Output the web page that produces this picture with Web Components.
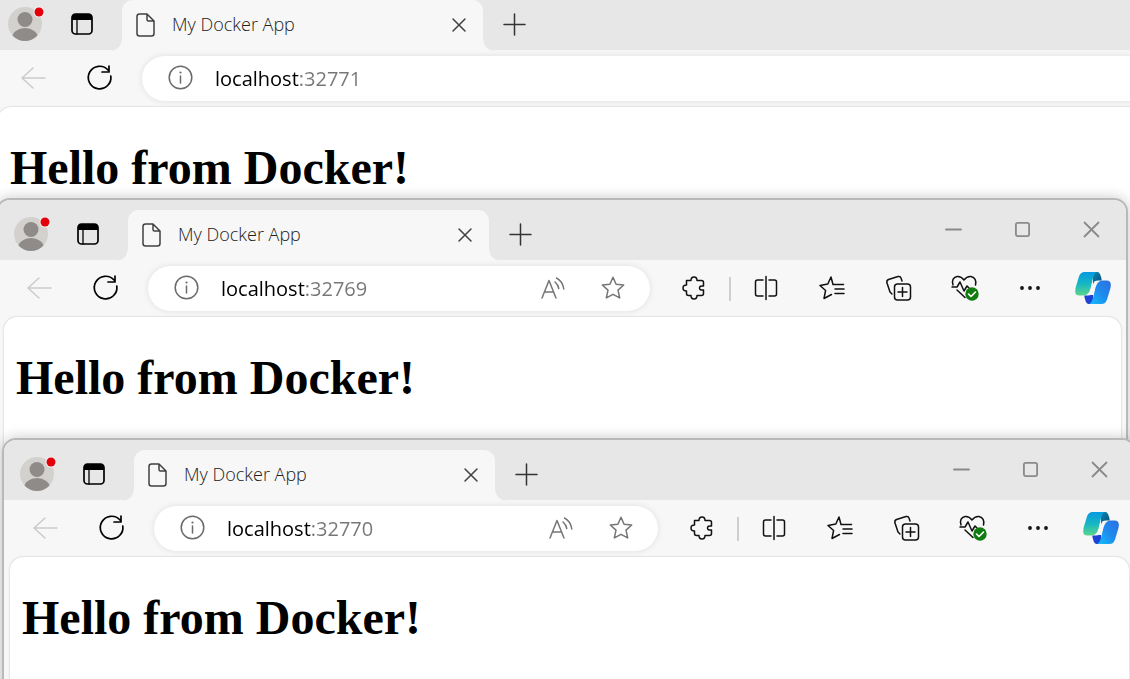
<!DOCTYPE html>
<html lang="en">
<head>
<meta charset="utf-8">
<title>My Docker App</title>
<style>
html, body { height: 100%; margin: 0; }
body { overflow: hidden; background: #fff; font-family: "Open Sans", "Noto Sans", sans-serif; }
h1 { margin: 0; font: bold 48px/56px "Liberation Serif", "Times New Roman", serif; color: #000; }
</style>
</head>
<body>
<desk-top>
  <browser-window style="left:-10px;right:-60px;top:-12px" label="My Docker App" address="localhost:32771">
    <h1>Hello from Docker!</h1>
  </browser-window>
  <browser-window style="left:-4px;right:2px;top:198px" label="My Docker App" address="localhost:32769">
    <window-controls slot="controls"></window-controls>
    <page-actions slot="actions"></page-actions>
    <tool-buttons slot="tools"></tool-buttons>
    <h1>Hello from Docker!</h1>
  </browser-window>
  <browser-window style="left:2px;right:-6px;top:438px" label="My Docker App" address="localhost:32770">
    <window-controls slot="controls"></window-controls>
    <page-actions slot="actions"></page-actions>
    <tool-buttons slot="tools"></tool-buttons>
    <h1>Hello from Docker!</h1>
  </browser-window>
</desk-top>

<script>
const reset = `
  *, *::before, *::after { box-sizing: border-box; }
  button { display: flex; align-items: center; justify-content: center; flex: none;
    margin: 0; padding: 0 0 2px; border: 0; background: none; color: inherit; font: inherit; }
  svg { display: block; flex: none; overflow: visible; }
`;

class BaseElement extends HTMLElement {
  connectedCallback() {
    if (this.shadowRoot) return;
    this.attachShadow({ mode: 'open' }).innerHTML = `<style>${reset}${this.css()}</style>${this.html()}`;
    this.ready();
  }
  css() { return ''; }
  html() { return ''; }
  ready() {}
}

/* Line icons: [width, height, markup] */
const icons = {
  profile: [50, 50, `
    <defs><clipPath id="c"><circle cx="25" cy="25" r="17"/></clipPath></defs>
    <circle cx="25" cy="25" r="17" fill="#d3d1cd" stroke="none"/>
    <g clip-path="url(#c)" fill="#8f8b88" stroke="none"><circle cx="25" cy="20.500" r="7.500"/><ellipse cx="25" cy="39" rx="13" ry="10"/></g>
    <circle cx="39" cy="13" r="5.500" fill="#f4f4f4" stroke="none"/><circle cx="39" cy="13" r="4.500" fill="#e3000b" stroke="none"/>`],
  tabs: [22, 22, `
    <rect x="1" y="1" width="20" height="20" rx="3.500" stroke-width="1.700"/>
    <path d="M1 7V4q0-3 3-3h14q3 0 3 3v3z" fill="currentColor" stroke="none"/><path d="M6 7v14" stroke-width="1.300"/>`],
  page: [20, 24, `<path d="M3.500 1H11l7 7v12.500q0 2.500-2.500 2.500h-12Q1 23 1 20.500v-17Q1 1 3.500 1zM11 1v5.500Q11 8 12.500 8H18"/>`],
  close: [12, 12, `<path d="M0 0l12 12M12 0L0 12"/>`],
  plus: [21, 21, `<path d="M10.500 0v21M0 10.500h21"/>`],
  back: [24, 22, `<path d="M12 1L1 11l11 10M1 11h23"/>`],
  reload: [25, 25, `<path d="M21 5A11.300 11.300 0 1 0 23.800 11M22 1v6h-7" stroke-width="1.700"/>`],
  info: [25, 25, `<circle cx="12.500" cy="12.500" r="11.300"/><path d="M12.500 11v7"/><circle cx="12.500" cy="7.500" r="1.100" fill="currentColor" stroke="none"/>`],
  minimize: [15, 15, `<path d="M0 7.500h15" stroke-width="1.800"/>`],
  maximize: [15, 15, `<rect x=".900" y=".900" width="13.200" height="13.200" rx="1.800" stroke-width="1.800"/>`],
  closeWindow: [15, 15, `<path d="M.500.500l14 14M14.500.500l-14 14" stroke-width="1.800"/>`],
  read: [24, 22, `<path d="M1 21L8 3.500 15 21M3.500 15h9M14 5q3 2.500 3.800 6.500M15.500 1q6 3 7.300 11"/>`],
  star: [24, 24, `<path d="M12 1.200l3.100 7 7.600.800-5.700 5.100 1.700 7.800L12 18.300l-6.700 3.600L7 14.100 1.300 9l7.600-.800z"/>`],
  puzzle: [24, 24, `<path d="M4.500 4.500H9Q9 1 12 1t3 3.500h4.500q2 0 2 2V10q-4-.5-4 2t4 2v3.500q0 2-2 2H15q0 3.500-3 3.500t-3-3.500H6.500q-2 0-2-2V15Q1 15 1 12t3.500-3z"/>`],
  split: [24, 24, `<path d="M9 4H3.500Q1.500 4 1.500 6v12q0 2 2 2H9M15 4h5.500q2 0 2 2v12q0 2-2 2H15M12 .500v23"/>`],
  favorites: [26, 24, `<path d="M14 8.500L12 1 8.800 8 1 9.500l5.600 5L5 22.500l7.500-4M14.500 8.500h10M16 13h9M16 17.500h9"/>`],
  collections: [26, 26, `<path d="M5 17L2 8q-.8-2.500 1.500-3.500L13 1.500q2.500-.5 3 1.500l1 3M5 17l2 2"/><rect x="9.500" y="9" width="16" height="16" rx="3"/><path d="M17.500 12.500v9M13 17h9"/>`],
  health: [28, 26, `<path d="M3 10Q1 3 7 1.500q4-.5 7 3.500 3-4 7-3.500 6 1.500 4.500 8.500M2 12h5l3-5 4 9 3-5 2 2M7 15l8 7.500"/>
    <circle cx="22" cy="19" r="6.700" fill="#107c10" stroke="none"/><path d="M18.500 19l2.500 2.500 4.500-4.500" stroke="#fff" stroke-width="1.600"/>`],
  more: [22, 6, `<g fill="currentColor" stroke="none"><circle cx="3" cy="3" r="1.900"/><circle cx="11" cy="3" r="1.900"/><circle cx="19" cy="3" r="1.900"/></g>`],
  copilot: [36, 32, `
    <defs>
      <linearGradient id="g" x1="0" y1="0" x2="0" y2="1"><stop offset="0" stop-color="#0799e0"/><stop offset=".5" stop-color="#16b7c4"/><stop offset="1" stop-color="#5bd58b"/></linearGradient>
      <linearGradient id="b" x1="1" y1="0" x2="0" y2="1"><stop offset="0" stop-color="#2f6fe0"/><stop offset=".5" stop-color="#1d8bee"/><stop offset="1" stop-color="#16c0fa"/></linearGradient>
      <linearGradient id="d" x1="0" y1="0" x2="1" y2="1"><stop offset="0" stop-color="#0b88ad"/><stop offset="1" stop-color="#0b4c80"/></linearGradient>
    </defs>
    <g stroke="none">
      <path d="M18 0h4.500q3 0 4.300 8.500H23q-4 0-5 4z" fill="url(#d)"/>
      <path d="M18 32h-4.500q-3 0-4.300-8.500H13q4 0 5-4z" fill="#1c43d5"/>
      <path d="M16 23l4-14h6l-5 14z" fill="#f7f7f7"/>
      <path d="M9.500 0H22q-2.500.5-4 6l-2.500 10.500q-2 7-7 7H4Q-1 23.500.500 16L4 4.500Q5.500 0 9.500 0z" fill="url(#g)"/>
      <path d="M26.500 32H14q2.500-.5 4-6l2.500-10.500q2-7 7-7h4.500q5 0 3.500 7.500L32 27.500Q30.500 32 26.500 32z" fill="url(#b)"/>
      <path d="M20 9.500h4.500q-3 1-4.300 5.500l-1.700 7q-.5 1-2.500 1h-3.500q3-1 4-5z" fill="#f7f7f7"/>
    </g>`]
};
const icon = name => {
  const [w, h, body] = icons[name];
  return `<svg width="${w}" height="${h}" viewBox="0 0 ${w} ${h}" fill="none" stroke="currentColor" stroke-width="1.500" stroke-linejoin="round" stroke-linecap="round" aria-hidden="true">${body}</svg>`;
};
const button = (label, name, cls = '') => `<button type="button" class="${cls}" aria-label="${label}">${icon(name)}</button>`;

customElements.define('desk-top', class extends BaseElement {
  css() { return `:host { display: block; position: relative; height: 100%; overflow: hidden; }`; }
  html() { return `<slot></slot>`; }
});

customElements.define('window-controls', class extends BaseElement {
  css() { return `:host { display: flex; color: #8a8a8a; } button { width: 69px; height: 60px; }`; }
  html() { return button('Minimize', 'minimize') + button('Maximize', 'maximize') + button('Close', 'closeWindow'); }
});

customElements.define('page-actions', class extends BaseElement {
  css() { return `:host { display: flex; color: #757575; padding-right: 7px; } button { width: 60px; height: 45px; }`; }
  html() { return button('Read aloud', 'read') + button('Add to favorites', 'star'); }
});

customElements.define('tool-buttons', class extends BaseElement {
  css() { return `
    :host { display: flex; align-items: center; color: #111; padding-left: 11px; }
    button { width: 66px; height: 45px; }
    .copilot { width: 59px; margin-right: 4px; }
    i { width: 2px; height: 24px; margin: 0 2px; background: #cfcfcf; }`; }
  html() {
    return button('Extensions', 'puzzle') + '<i></i>' + button('Split screen', 'split') +
      button('Favorites', 'favorites') + button('Collections', 'collections') +
      button('Browser essentials', 'health') + button('Settings and more', 'more') + button('Copilot', 'copilot', 'copilot');
  }
});

customElements.define('browser-window', class extends BaseElement {
  css() { return `
    :host { display: flex; flex-direction: column; position: absolute; bottom: -20px; overflow: hidden;
      border: 2px solid #b9b9b9; border-radius: 14px; background: #f7f7f7; box-shadow: 0 0 14px rgba(0,0,0,.22); }
    .strip { display: flex; justify-content: space-between; align-items: flex-start; height: 60px; flex: none; background: #e7e7e7; }
    .tabs { display: flex; align-items: center; padding: 9px 0 0 8px; }
    .profile { width: 50px; }
    .menu { width: 64px; margin-right: 8px; color: #000; }
    .tab { position: relative; display: flex; align-items: center; width: 361px; height: 51px; padding: 0 18px 0 14px;
      background: #f7f7f7; border-radius: 11px 11px 0 0; color: #404040; }
    .tab::before, .tab::after { content: ""; position: absolute; bottom: 0; width: 11px; height: 11px; }
    .tab::before { right: 100%; background: radial-gradient(circle at 0 0, #e7e7e7 10px, #f7f7f7 11px); }
    .tab::after { left: 100%; background: radial-gradient(circle at 100% 0, #e7e7e7 10px, #f7f7f7 11px); }
    .title { flex: 1; padding: 0 0 2px 16px; font-size: 18px; line-height: 24px; font-weight: 300; color: #222; white-space: nowrap; }
    .tab button { width: 12px; height: 24px; padding: 0; }
    .new { width: 31px; height: 31px; margin-left: 16px; color: #333; }
    .bar { display: flex; align-items: center; height: 57px; flex: none; padding-left: 8px; }
    .nav { width: 66px; height: 45px; color: #000; }
    .nav:disabled { color: #cbcbcb; }
    .address { display: flex; align-items: center; flex: 1; min-width: 0; height: 45px; margin-left: 10px; padding-left: 26px;
      background: #fff; border-radius: 23px; box-shadow: 0 0 6px rgba(0,0,0,.1); }
    .info { width: 25px; height: 45px; color: #6b6b6b; }
    input { flex: 1; min-width: 0; height: 32px; margin-left: 22px; padding: 0; border: 0; outline: 0;
      font: 400 20px/32px "Open Sans", "Noto Sans", sans-serif;
      background: linear-gradient(90deg, #000 var(--host, 0px), #767676 var(--host, 0px)); background-clip: text; -webkit-background-clip: text;
      -webkit-text-fill-color: transparent; }
    main { flex: 1; margin: 0 5px 0 6px; padding: 33px 12px; background: #fff; border-radius: 13px 13px 0 0;
      box-shadow: 0 0 2px rgba(0,0,0,.25); }`; }
  html() { return `
    <div class="strip">
      <div class="tabs">
        ${button('Profile', 'profile', 'profile')}${button('Tab actions menu', 'tabs', 'menu')}
        <div class="tab">${icon('page')}<span class="title"></span>${button('Close tab', 'close')}</div>
        ${button('New tab', 'plus', 'new')}
      </div>
      <slot name="controls"></slot>
    </div>
    <div class="bar">
      <button type="button" class="nav" aria-label="Back" disabled>${icon('back')}</button>
      ${button('Reload', 'reload', 'nav')}
      <div class="address">${button('Site information', 'info', 'info')}<input type="text" aria-label="Address" spellcheck="false"><slot name="actions"></slot></div>
      <slot name="tools"></slot>
    </div>
    <main><slot></slot></main>`; }
  ready() {
    const root = this.shadowRoot, input = root.querySelector('input');
    root.querySelector('.title').textContent = this.getAttribute('label');
    input.value = this.getAttribute('address');
    const pen = document.createElement('canvas').getContext('2d');
    pen.font = '400 20px "Open Sans", "Noto Sans", sans-serif';
    input.style.setProperty('--host', Math.round(pen.measureText(input.value.split(':')[0]).width) + 'px');
  }
});
</script>
</body>
</html>
